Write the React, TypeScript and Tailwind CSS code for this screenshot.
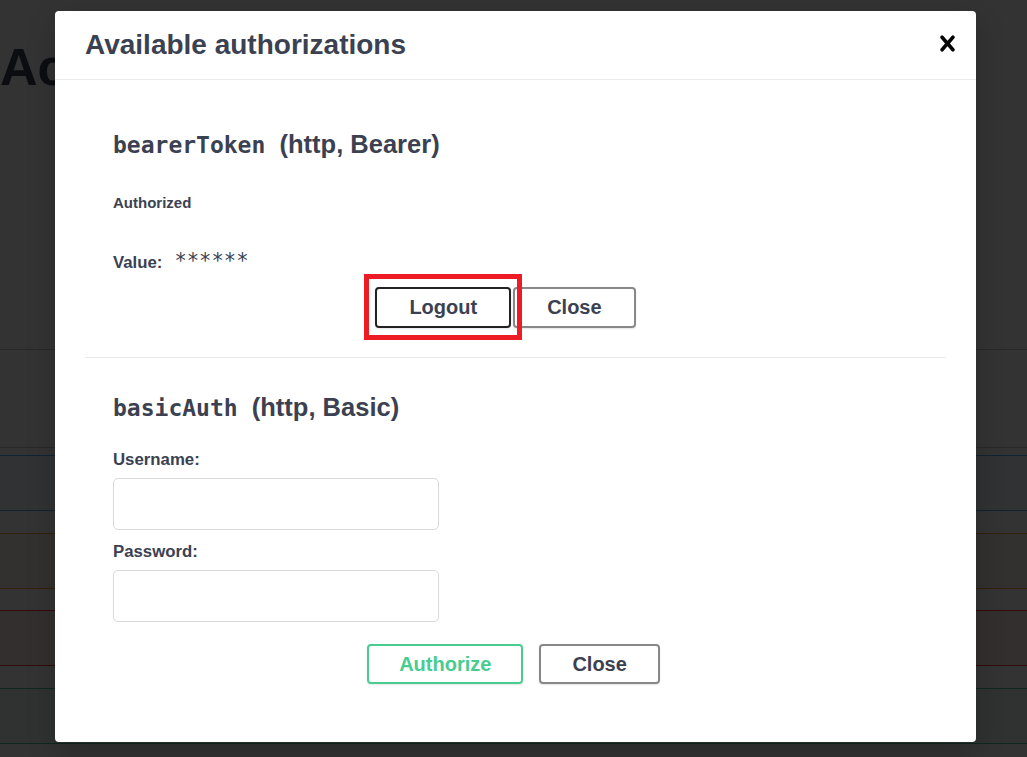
import type { ReactNode } from "react";

const opblocks = [
  "border-[#61affe] bg-[#61affe]/10",
  "border-[#fca130] bg-[#fca130]/10",
  "border-[#f93e3e] bg-[#f93e3e]/10",
  "border-[#49cc90] bg-[#49cc90]/10",
];

function ModalButton({ children, className }: { children: ReactNode; className: string }) {
  return (
    <button
      className={`rounded-[4px] border-2 bg-transparent py-[7px] text-[20px] font-bold shadow-[0_1px_2px_rgba(0,0,0,0.1)] ${className}`}
    >
      {children}
    </button>
  );
}

function AuthHeading({ name, scheme }: { name: string; scheme: string }) {
  return (
    <h4 className="text-[25.5px] leading-[32px] font-bold">
      <code className="font-['DejaVu_Sans_Mono',monospace] text-[23px]">{name}</code>
      {"\u00a0 "}({scheme})
    </h4>
  );
}

function Field({ label, type, className }: { label: string; type: string; className: string }) {
  return (
    <div className={className}>
      <label className="block text-[16.8px] leading-none font-bold">{label}</label>
      <input
        type={type}
        className="mt-[9px] block h-[52px] w-[326px] rounded-[5px] border border-[#d9d9d9] bg-white px-[10px] outline-none"
      />
    </div>
  );
}

export default function App() {
  return (
    <div className="relative h-[757px] w-[1027px] overflow-hidden bg-white font-['Liberation_Sans',Arial,sans-serif] text-[#3b4151]">
      {/* page behind the dialog */}
      <div className="h-[350px] border-b border-[#3b4151]/30 pt-[41px]">
        <h2 className="text-[52px] leading-none font-bold whitespace-nowrap">Accounts API</h2>
      </div>
      <div className="h-[98px] border-b border-[#3b4151]/30" />
      <div className="-mx-[4px] flex flex-col gap-[21.7px] pt-[7px]">
        {opblocks.map((c) => (
          <div key={c} className={`h-[56px] border ${c}`} />
        ))}
      </div>

      <div className="absolute inset-0 bg-black/80" />

      {/* dialog */}
      <div className="absolute top-[11px] left-[55px] flex h-[731px] w-[921px] flex-col rounded-[4px] bg-white shadow-[0_10px_30px_rgba(0,0,0,0.2)]">
        <div className="flex h-[69px] items-center justify-between border-b border-[#ebebeb] pr-[13px] pl-[30px]">
          <h3 className="text-[28px] leading-none font-bold">Available authorizations</h3>
          <svg viewBox="0 0 20 20" className="mb-[4px] h-[31px] w-[31px]" aria-label="Close">
            <path
              fill="#000"
              d="M14.348 14.849a1.2 1.2 0 0 1-1.697 0L10 11.819l-2.651 3.029a1.2 1.2 0 1 1-1.697-1.697l2.758-3.15-2.759-3.152a1.2 1.2 0 1 1 1.697-1.697L10 8.183l2.651-3.031a1.2 1.2 0 1 1 1.697 1.697l-2.758 3.152 2.758 3.15a1.2 1.2 0 0 1 0 1.698z"
            />
          </svg>
        </div>

        <div className="px-[30px]">
          <div className="border-b border-[#ebebeb] px-[28px] pt-[48px] pb-[29px]">
            <AuthHeading name="bearerToken" scheme="http, Bearer" />
            <h6 className="mt-[34px] text-[15px] leading-none font-bold">Authorized</h6>
            <div className="mt-[41px] flex items-baseline">
              <label className="text-[16.8px] leading-[20px] font-bold">Value:</label>
              <code className="ml-[12px] font-['DejaVu_Sans_Mono',monospace] text-[20.5px] leading-[20px]">******</code>
            </div>
            <div className="mt-[14px] flex justify-center gap-[2px] pr-[20px]">
              <div className="relative">
                <ModalButton className="border-[#222] px-[32px] leading-[23px]">Logout</ModalButton>
                <div className="absolute -top-[13px] -right-[11px] -bottom-[12px] -left-[11px] border-[5px] border-[#ed1c24]" />
              </div>
              <ModalButton className="border-[#888] px-[32px] leading-[23px]">Close</ModalButton>
            </div>
          </div>

          <div className="px-[28px] pt-[33px]">
            <AuthHeading name="basicAuth" scheme="http, Basic" />
            <Field label="Username:" type="text" className="mt-[28px]" />
            <Field label="Password:" type="password" className="mt-[14px]" />
            <div className="mt-[22px] flex justify-center gap-[16px] pr-[4px]">
              <ModalButton className="border-[#49cc90] px-[30px] leading-[22px] text-[#49cc90]">Authorize</ModalButton>
              <ModalButton className="border-[#888] px-[31px] leading-[22px]">Close</ModalButton>
            </div>
          </div>
        </div>
      </div>
    </div>
  );
}
